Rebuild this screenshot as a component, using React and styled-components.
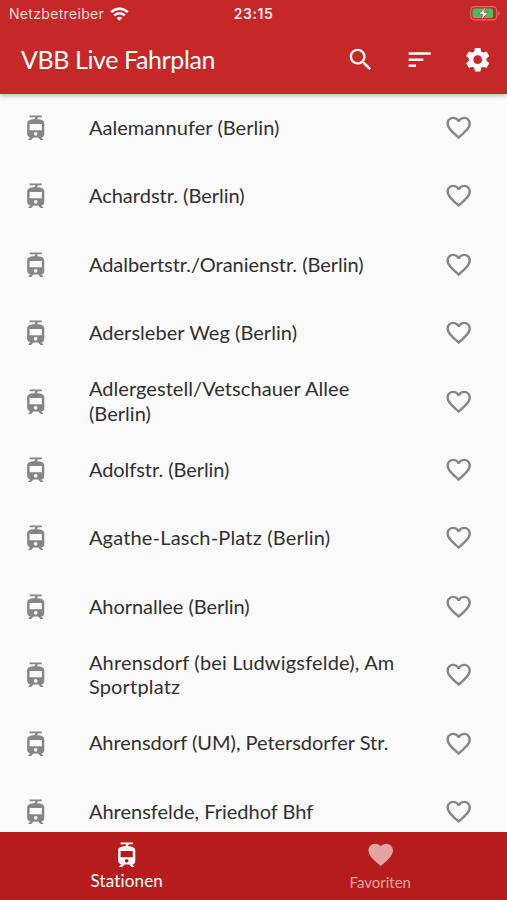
import React from 'react';
import styled, { createGlobalStyle } from 'styled-components';
import { MdSearch, MdSort, MdSettings, MdTram, MdFavoriteBorder, MdFavorite } from 'react-icons/md';

const GlobalStyle = createGlobalStyle`
  * { box-sizing: border-box; }
  body { margin: 0; background: #fafafa; }
`;

const Screen = styled.div`
  width: 507px;
  height: 900px;
  display: flex;
  flex-direction: column;
  overflow: hidden;
  background: #fafafa;
  font-family: Lato, "Noto Sans", sans-serif;
  font-variant-ligatures: none;
`;

const Header = styled.header`
  flex: none;
  height: 93.5px;
  background: #c62828;
  color: #fff;
  box-shadow: 0 1px 5px rgba(0, 0, 0, 0.35);
  z-index: 1;
`;

const StatusBar = styled.div`
  height: 26px;
  padding: 1px 7px 0 9px;
  display: grid;
  grid-template-columns: 1fr auto 1fr;
  align-items: center;
  font-family: Inter, sans-serif;
  font-size: 14px;
  color: #fbdada;
`;

const Carrier = styled.div`
  display: flex;
  align-items: center;
  gap: 6px;
  letter-spacing: 0.32px;
`;

const Clock = styled.div`
  margin-right: 2px;
  font-weight: 600;
  letter-spacing: 0.55px;
  color: #ffeaea;
`;

const BatterySlot = styled.div`
  display: flex;
  justify-content: flex-end;
  margin-right: -1px;
`;

const Toolbar = styled.div`
  height: 67px;
  padding: 0 14.5px 0 21px;
  display: flex;
  align-items: center;
`;

const Title = styled.h1`
  flex: 1;
  margin: 0;
  padding-bottom: 2px;
  font-size: 25px;
  font-weight: 400;
  line-height: 30px;
  letter-spacing: ${(p) => p.$tracking}px;
  white-space: nowrap;
`;

const Actions = styled.div`
  display: flex;
  gap: 29.2px;
  svg { display: block; }
`;

const List = styled.ul`
  flex: 1;
  min-height: 0;
  margin: 0;
  padding: 0;
  list-style: none;
  overflow: hidden;
`;

const Row = styled.li`
  height: 68.4px;
  padding: 0 34px 0 20.5px;
  display: flex;
  align-items: center;
  color: #868686;
  svg { flex: none; display: block; }
`;

const StationName = styled.span`
  flex: 1;
  margin-left: 39px;
  padding-bottom: 1.3px;
  font-size: 20px;
  line-height: 24.4px;
  letter-spacing: ${(p) => p.$tracking}px;
  color: #303030;
  white-space: pre;
`;

const BottomNav = styled.nav`
  flex: none;
  height: 68.5px;
  display: grid;
  grid-template-columns: 1fr 1fr;
  background: #b71c1c;
`;

const Tab = styled.div`
  padding-top: 8.5px;
  display: flex;
  flex-direction: column;
  align-items: center;
  color: ${(p) => (p.$active ? '#fff' : '#e5a4a4')};
  svg { display: block; }
`;

const TabLabel = styled.span`
  margin-top: ${(p) => (p.$active ? 2 : 3)}px;
  font-size: ${(p) => (p.$active ? 17 : 15)}px;
  line-height: 20px;
  letter-spacing: ${(p) => p.$tracking}px;
`;

const stations = [
  { name: 'Aalemannufer (Berlin)', tracking: 0.05 },
  { name: 'Achardstr. (Berlin)', tracking: 0 },
  { name: 'Adalbertstr./Oranienstr. (Berlin)', tracking: -0.03 },
  { name: 'Adersleber Weg (Berlin)', tracking: 0.05 },
  { name: 'Adlergestell/Vetschauer Allee\n(Berlin)', tracking: 0.06 },
  { name: 'Adolfstr. (Berlin)', tracking: -0.05 },
  { name: 'Agathe-Lasch-Platz (Berlin)', tracking: 0.18 },
  { name: 'Ahornallee (Berlin)', tracking: -0.05 },
  { name: 'Ahrensdorf (bei Ludwigsfelde), Am\nSportplatz', tracking: 0.18 },
  { name: 'Ahrensdorf (UM), Petersdorfer Str.', tracking: -0.03 },
  { name: 'Ahrensfelde, Friedhof Bhf', tracking: 0 },
];

const WifiIcon = () => (
  <svg width="19" height="14" viewBox="0 0 19 14" fill="none" stroke="#fff" strokeWidth="2.5">
    <path d="M1.2 5.1C5.9.5 13.1.5 17.8 5.1" />
    <path d="M4.2 8.3c3-2.9 7.6-2.9 10.6 0" />
    <path d="M9.5 13.7 6.7 10.9c1.6-1.5 4-1.5 5.6 0z" fill="#fff" stroke="none" />
  </svg>
);

const BatteryIcon = () => (
  <svg width="31" height="15" viewBox="0 0 31 15">
    <rect x="0.7" y="0.7" width="26" height="13.2" rx="3.8" fill="none" stroke="#e06c6c" strokeWidth="1.2" />
    <path d="M28.3 5v4.8c2-.8 2-4 0-4.8z" fill="#e06c6c" />
    <rect x="2.5" y="2.5" width="20.5" height="9.6" rx="2" fill="#35c759" />
    <path d="M15.3 1.2 8.7 8.2h4L11.5 13.5l6.8-7.1h-4z" fill="#fff" stroke="#c62828" strokeWidth="0.7" />
  </svg>
);

export default function App() {
  return (
    <Screen>
      <GlobalStyle />
      <Header>
        <StatusBar>
          <Carrier>
            <span>Netzbetreiber</span>
            <WifiIcon />
          </Carrier>
          <Clock>23:15</Clock>
          <BatterySlot><BatteryIcon /></BatterySlot>
        </StatusBar>
        <Toolbar>
          <Title $tracking={-0.4}>VBB Live Fahrplan</Title>
          <Actions>
            <MdSearch size={29.4} />
            <MdSort size={29.4} />
            <MdSettings size={29.4} />
          </Actions>
        </Toolbar>
      </Header>
      <List>
        {stations.map(({ name, tracking }) => (
          <Row key={name}>
            <MdTram size={29.4} />
            <StationName $tracking={tracking}>{name}</StationName>
            <MdFavoriteBorder size={29.4} />
          </Row>
        ))}
      </List>
      <BottomNav>
        <Tab $active>
          <MdTram size={29.4} />
          <TabLabel $active $tracking={0.15}>Stationen</TabLabel>
        </Tab>
        <Tab>
          <MdFavorite size={29.4} />
          <TabLabel $tracking={0}>Favoriten</TabLabel>
        </Tab>
      </BottomNav>
    </Screen>
  );
}
